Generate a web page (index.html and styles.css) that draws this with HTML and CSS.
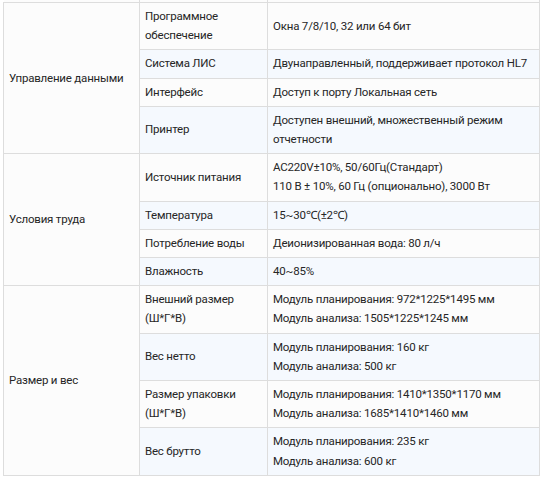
FILE: index.html
```html
<!DOCTYPE html>
<html lang="ru">
<head>
<meta charset="utf-8">
<link rel="stylesheet" href="styles.css">
</head>
<body>
<div class="wrap">
<table class="spec">
<colgroup><col class="c1"><col class="c2"><col class="c3"></colgroup>
<tbody>
<tr class="prev"><td></td><td></td><td></td></tr>
<tr><td rowspan="4" class="group">Управление данными</td><td>Программное<br>обеспечение</td><td>Окна 7/8/10, 32 или 64 бит</td></tr>
<tr><td>Система ЛИС</td><td>Двунаправленный, поддерживает протокол HL7</td></tr>
<tr><td>Интерфейс</td><td>Доступ к порту Локальная сеть</td></tr>
<tr><td>Принтер</td><td>Доступен внешний, множественный режим<br>отчетности</td></tr>
<tr><td rowspan="4" class="group">Условия труда</td><td>Источник питания</td><td>AC220V±10%, 50/60Гц(Стандарт)<br>110 В ± 10%, 60 Гц (опционально), 3000 Вт</td></tr>
<tr><td>Температура</td><td>15~30℃(±2℃)</td></tr>
<tr><td>Потребление воды</td><td>Деионизированная вода: 80 л/ч</td></tr>
<tr><td>Влажность</td><td>40~85%</td></tr>
<tr><td rowspan="4" class="group">Размер и вес</td><td>Внешний размер<br>(Ш*Г*В)</td><td>Модуль планирования: 972*1225*1495 мм<br>Модуль анализа: 1505*1225*1245 мм</td></tr>
<tr><td>Вес нетто</td><td>Модуль планирования: 160 кг<br>Модуль анализа: 500 кг</td></tr>
<tr><td>Размер упаковки<br>(Ш*Г*В)</td><td>Модуль планирования: 1410*1350*1170 мм<br>Модуль анализа: 1685*1410*1460 мм</td></tr>
<tr><td>Вес брутто</td><td>Модуль планирования: 235 кг<br>Модуль анализа: 600 кг</td></tr>
</tbody>
</table>
</div>
</body>
</html>
```
FILE: styles.css
```css
html, body {
  margin: 0;
  padding: 0;
  background: #ffffff;
}
.wrap {
  padding-left: 3px;
  overflow: hidden;
  height: 477px;
}
.spec {
  border-collapse: collapse;
  table-layout: fixed;
  width: 536px;
  margin-top: -10px;
  font-family: Roboto, "Noto Sans", sans-serif;
  font-size: 11.5px;
  letter-spacing: -0.2px;
  line-height: 19.2px;
  color: #262626;
}
.c1 { width: 136px; }
.c2 { width: 128px; }
.c3 { width: 272px; }
.spec td {
  border: 1px solid #dddddd;
  padding: 4px 4px 4px 5px;
  vertical-align: middle;
  background: #fcfcfc;
  white-space: nowrap;
  overflow: hidden;
}
.spec tr:nth-child(odd) td {
  background: #f5f9fe;
}
.spec tr:nth-child(odd) td.group {
  background: #fcfcfc;
}
.spec tr.prev td {
  height: 11px;
  padding: 0;
  background: #fcfcfc;
}
.spec tr.prev td:first-child {
  border-left-color: transparent;
}
```
